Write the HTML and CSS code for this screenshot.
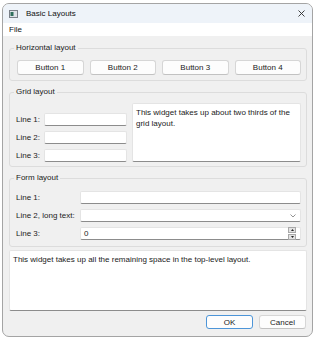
FILE: index.html
```html
<!DOCTYPE html>
<html lang="en">
<head>
  <meta charset="UTF-8">
  <title>Basic Layouts</title>
  <link rel="stylesheet" href="styles.css">
</head>
<body>
  <div class="window">
    <div class="titlebar">
      <svg class="app-icon" width="9" height="8" viewBox="0 0 9 8">
        <rect x="0.5" y="0.5" width="8" height="7" fill="#dfe3e8" stroke="#7a8088"/>
        <rect x="1.5" y="2" width="3" height="4" fill="#2f6f5c"/>
      </svg>
      <span class="title">Basic Layouts</span>
      <svg class="close" width="7" height="7" viewBox="0 0 7 7">
        <path d="M0.5 0.5 L6.5 6.5 M6.5 0.5 L0.5 6.5" stroke="#2b2b2b" stroke-width="0.9" fill="none"/>
      </svg>
    </div>
    <div class="menubar"><span>File</span></div>

    <div class="content">
      <fieldset class="group horizontal-group">
        <legend>Horizontal layout</legend>
        <div class="hbox">
          <button class="btn">Button 1</button>
          <button class="btn">Button 2</button>
          <button class="btn">Button 3</button>
          <button class="btn">Button 4</button>
        </div>
      </fieldset>

      <fieldset class="group grid-group">
        <legend>Grid layout</legend>
        <div class="grid-layout">
          <div class="grid-fields">
            <span class="label">Line 1:</span><div class="line-edit"></div>
            <span class="label">Line 2:</span><div class="line-edit"></div>
            <span class="label">Line 3:</span><div class="line-edit"></div>
          </div>
          <div class="text-edit">This widget takes up about two thirds of the grid layout.</div>
        </div>
      </fieldset>

      <fieldset class="group form-group">
        <legend>Form layout</legend>
        <div class="form-layout">
          <span class="label">Line 1:</span>
          <div class="line-edit"></div>
          <span class="label">Line 2, long text:</span>
          <div class="line-edit combo">
            <svg width="6" height="4" viewBox="0 0 6 4"><path d="M0.5 0.5 L3 3 L5.5 0.5" stroke="#777" stroke-width="0.8" fill="none"/></svg>
          </div>
          <span class="label">Line 3:</span>
          <div class="line-edit spin">
            <span class="spin-value">0</span>
            <span class="spin-buttons">
              <span class="spin-btn"><svg width="3" height="2" viewBox="0 0 3 2"><path d="M0 2 L1.5 0 L3 2 Z" fill="#222"/></svg></span>
              <span class="spin-btn"><svg width="3" height="2" viewBox="0 0 3 2"><path d="M0 0 L1.5 2 L3 0 Z" fill="#222"/></svg></span>
            </span>
          </div>
        </div>
      </fieldset>

      <div class="text-edit big-edit">This widget takes up all the remaining space in the top-level layout.</div>

      <div class="button-box">
        <button class="btn dialog-btn default">OK</button>
        <button class="btn dialog-btn">Cancel</button>
      </div>
    </div>
  </div>
</body>
</html>
```

FILE: styles.css
```css
body {
  margin: 0;
  background: #ffffff;
  font-family: "Liberation Sans", Arial, sans-serif;
  font-size: 8px;
  color: #1b1b1b;
}

.window {
  margin: 3px 0 0 2px;
  width: 311px;
  height: 334px;
  box-sizing: border-box;
  border: 1px solid #a4a4a4;
  border-radius: 7px;
  overflow: hidden;
  display: flex;
  flex-direction: column;
  background: #f0f0f0;
}

.titlebar {
  height: 19px;
  flex: none;
  background: #eef3f9;
  display: flex;
  align-items: center;
  padding: 0 6px;
}

.app-icon {
  margin-top: 1px;
}

.title {
  margin-left: 8px;
  flex: 1;
  color: #111;
}

.close {
  margin-right: 1px;
}

.menubar {
  height: 13px;
  flex: none;
  background: #ffffff;
  padding-left: 6px;
  line-height: 13px;
  color: #111;
}

.content {
  flex: 1;
  padding: 7px 5px 0 6px;
  display: flex;
  flex-direction: column;
}

.group {
  margin: 0;
  min-width: 0;
  border: 1px solid #dcdcdc;
  border-radius: 3px;
  padding: 7px 5px 5px 6px;
}

.group legend {
  padding: 0 2px;
  margin-left: -2px;
  line-height: 10px;
}

.grid-group {
  margin-top: 6px;
  padding: 6px 5px 4px 6px;
}

.form-group {
  margin-top: 6px;
  padding: 8px 5px 6px 6px;
}

.hbox {
  display: flex;
  gap: 6px;
  padding-left: 1px;
}

.btn {
  height: 15px;
  padding: 0;
  font-family: inherit;
  font-size: 8px;
  color: #1b1b1b;
  background: #fdfdfd;
  border: 1px solid #d6d6d6;
  border-bottom-color: #c2c2c2;
  border-radius: 3px;
}

.hbox .btn {
  flex: 1;
}

.grid-layout {
  display: flex;
  gap: 5px;
}

.grid-fields {
  display: grid;
  grid-template-columns: 28px 83px;
  row-gap: 5px;
  align-content: end;
  align-items: center;
}

.line-edit {
  height: 13px;
  box-sizing: border-box;
  background: #ffffff;
  border: 1px solid #e4e4e4;
  border-bottom-color: #8c8c8c;
  border-radius: 2px;
}

.text-edit {
  flex: 1;
  height: 59px;
  box-sizing: border-box;
  padding: 3px 3px;
  line-height: 11px;
  background: #ffffff;
  border: 1px solid #e4e4e4;
  border-bottom-color: #8c8c8c;
  border-radius: 2px;
}

.form-layout {
  display: grid;
  grid-template-columns: 64px 1fr;
  row-gap: 5px;
  align-items: center;
}

.combo {
  display: flex;
  align-items: center;
  justify-content: flex-end;
  padding-right: 4px;
}

.spin {
  display: flex;
  align-items: center;
  padding: 0 4px 0 3px;
}

.spin-value {
  flex: 1;
  line-height: 11px;
}

.spin-buttons {
  display: flex;
  flex-direction: column;
  gap: 1px;
}

.spin-btn {
  width: 6px;
  height: 4px;
  display: flex;
  align-items: center;
  justify-content: center;
  background: #e2e2e2;
  border: 1px solid #a8a8a8;
}

.big-edit {
  flex: none;
  height: 61px;
  margin-top: 3px;
}

.button-box {
  display: flex;
  justify-content: flex-end;
  gap: 6px;
  margin-top: 4px;
  padding-right: 1px;
}

.dialog-btn {
  width: 47px;
  height: 14px;
}

.default {
  border-color: #4d95d8;
}
```
